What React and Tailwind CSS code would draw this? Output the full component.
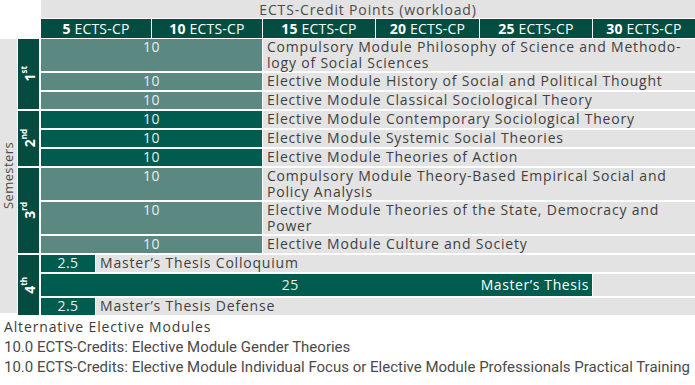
import React from 'react';

const FONT = { fontFamily: '"Open Sans", "Noto Sans", sans-serif' };

function Sem({ n, sup }) {
  return (
    <div className="w-[21px] shrink-0 bg-[#044c40] flex items-center justify-center">
      <div className="[writing-mode:vertical-rl] rotate-180 text-white font-bold text-[14px] leading-none whitespace-nowrap">
        {n}
        <span className="text-[8px] align-[6px]">{sup}</span>
      </div>
    </div>
  );
}

function Row({ v, text, h, tone }) {
  const bg = tone === 'light' ? 'bg-[#5b8880]' : 'bg-[#005c4f]';
  return (
    <div className={`flex gap-px ${h}`}>
      <div className={`w-[221px] shrink-0 ${bg} text-[#e9eeec] text-[14px] leading-[16px] text-center tracking-[0.5px]`}>{v}</div>
      <div className="flex-1 bg-[#e3e3e3] text-[#3f3f3f] text-[14px] leading-[16px] pl-[4px] tracking-[0.8px] whitespace-nowrap">{text}</div>
    </div>
  );
}

function SmallRow({ text }) {
  return (
    <div className="flex gap-px h-[17px]">
      <div className="w-[54px] shrink-0 bg-[#005c4f] text-[#e9eeec] text-[14px] leading-[16px] text-center tracking-[0.5px]">2.5</div>
      <div className="flex-1 bg-[#e3e3e3] text-[#3f3f3f] text-[14px] leading-[16px] pl-[4px] tracking-[0.8px]">{text}</div>
    </div>
  );
}

export default function App() {
  const heads = [
    ['5', 'w-[110px]'],
    ['10', 'w-[110px]'],
    ['15', 'w-[112px]'],
    ['20', 'w-[103px]'],
    ['25', 'w-[112px]'],
    ['30', 'flex-1'],
  ];
  return (
    <div className="w-[695px] h-[385px] bg-white overflow-hidden" style={FONT}>
      <div className="flex">
        <div className="w-[41px] shrink-0" />
        <div className="flex-1 flex flex-col">
          <div className="h-[18px] bg-[#e3e3e3] text-[#4a4a4a] text-[14px] leading-[18px] text-center tracking-[0.85px] pt-[1px]">
            ECTS-Credit Points (workload)
          </div>
          <div className="flex gap-px h-[19px] mt-px">
            {heads.map(([n, w]) => (
              <div key={n} className={`${w} bg-[#034d41] text-white text-[14px] leading-[19px] text-center tracking-[0.2px]`}>
                <span className="font-bold">{n}</span> ECTS-CP
              </div>
            ))}
          </div>
        </div>
      </div>
      <div className="flex mt-px h-[274px]">
        <div className="w-[17px] shrink-0 bg-[#e4e4e4] flex items-center justify-center">
          <div className="[writing-mode:vertical-rl] rotate-180 text-[#4a4a4a] text-[13px] leading-none tracking-[0.4px]">Semesters</div>
        </div>
        <div className="w-px shrink-0" />
        <div className="flex-1 flex flex-col gap-[2px]">
          <div className="flex gap-[2px]">
            <Sem n="1" sup="st" />
            <div className="flex-1 flex flex-col gap-[2px]">
              <Row v="10" tone="light" h="h-[32px]" text={<>Compulsory Module Philosophy of Science and Methodo-<br />logy of Social Sciences</>} />
              <Row v="10" tone="light" h="h-[17px]" text="Elective Module History of Social and Political Thought" />
              <Row v="10" tone="light" h="h-[17px]" text="Elective Module Classical Sociological Theory" />
            </div>
          </div>
          <div className="flex gap-[2px]">
            <Sem n="2" sup="nd" />
            <div className="flex-1 flex flex-col gap-[2px]">
              <Row v="10" tone="dark" h="h-[17px]" text="Elective Module Contemporary Sociological Theory" />
              <Row v="10" tone="dark" h="h-[17px]" text="Elective Module Systemic Social Theories" />
              <Row v="10" tone="dark" h="h-[17px]" text="Elective Module Theories of Action" />
            </div>
          </div>
          <div className="flex gap-[2px]">
            <Sem n="3" sup="rd" />
            <div className="flex-1 flex flex-col gap-[2px]">
              <Row v="10" tone="light" h="h-[32px]" text={<>Compulsory Module Theory-Based Empirical Social and<br />Policy Analysis</>} />
              <Row v="10" tone="light" h="h-[32px]" text={<>Elective Module Theories of the State, Democracy and<br />Power</>} />
              <Row v="10" tone="light" h="h-[17px]" text="Elective Module Culture and Society" />
            </div>
          </div>
          <div className="flex gap-[2px] flex-1">
            <Sem n="4" sup="th" />
            <div className="flex-1 flex flex-col gap-[2px]">
              <SmallRow text="Master’s Thesis Colloquium" />
              <div className="flex gap-px h-[22px]">
                <div className="w-[551px] shrink-0 bg-[#005c4f] text-[14px] leading-[22px] flex">
                  <span className="ml-[59px] w-[400px] text-center text-[#e9eeec] tracking-[0.5px]">25</span>
                  <span className="flex-1 text-right pr-[3px] text-white tracking-[0.6px] whitespace-nowrap">Master’s Thesis</span>
                </div>
                <div className="flex-1 bg-[#e3e3e3]" />
              </div>
              <SmallRow text="Master’s Thesis Defense" />
            </div>
          </div>
        </div>
      </div>
      <div className="pl-[4px] pt-[4px]">
        <div className="text-[14px] leading-[20px] tracking-[0.85px] text-[#3c3c3c]">Alternative Elective Modules</div>
        <div className="text-[15px] leading-[20px] whitespace-nowrap text-[#4a4a4a]" style={{ fontFamily: '"Roboto", sans-serif' }}>10.0 ECTS-Credits: Elective Module Gender Theories</div>
        <div className="text-[15px] leading-[20px] whitespace-nowrap text-[#4a4a4a]" style={{ fontFamily: '"Roboto", sans-serif' }}>10.0 ECTS-Credits: Elective Module Individual Focus or Elective Module Professionals Practical Training</div>
      </div>
    </div>
  );
}
